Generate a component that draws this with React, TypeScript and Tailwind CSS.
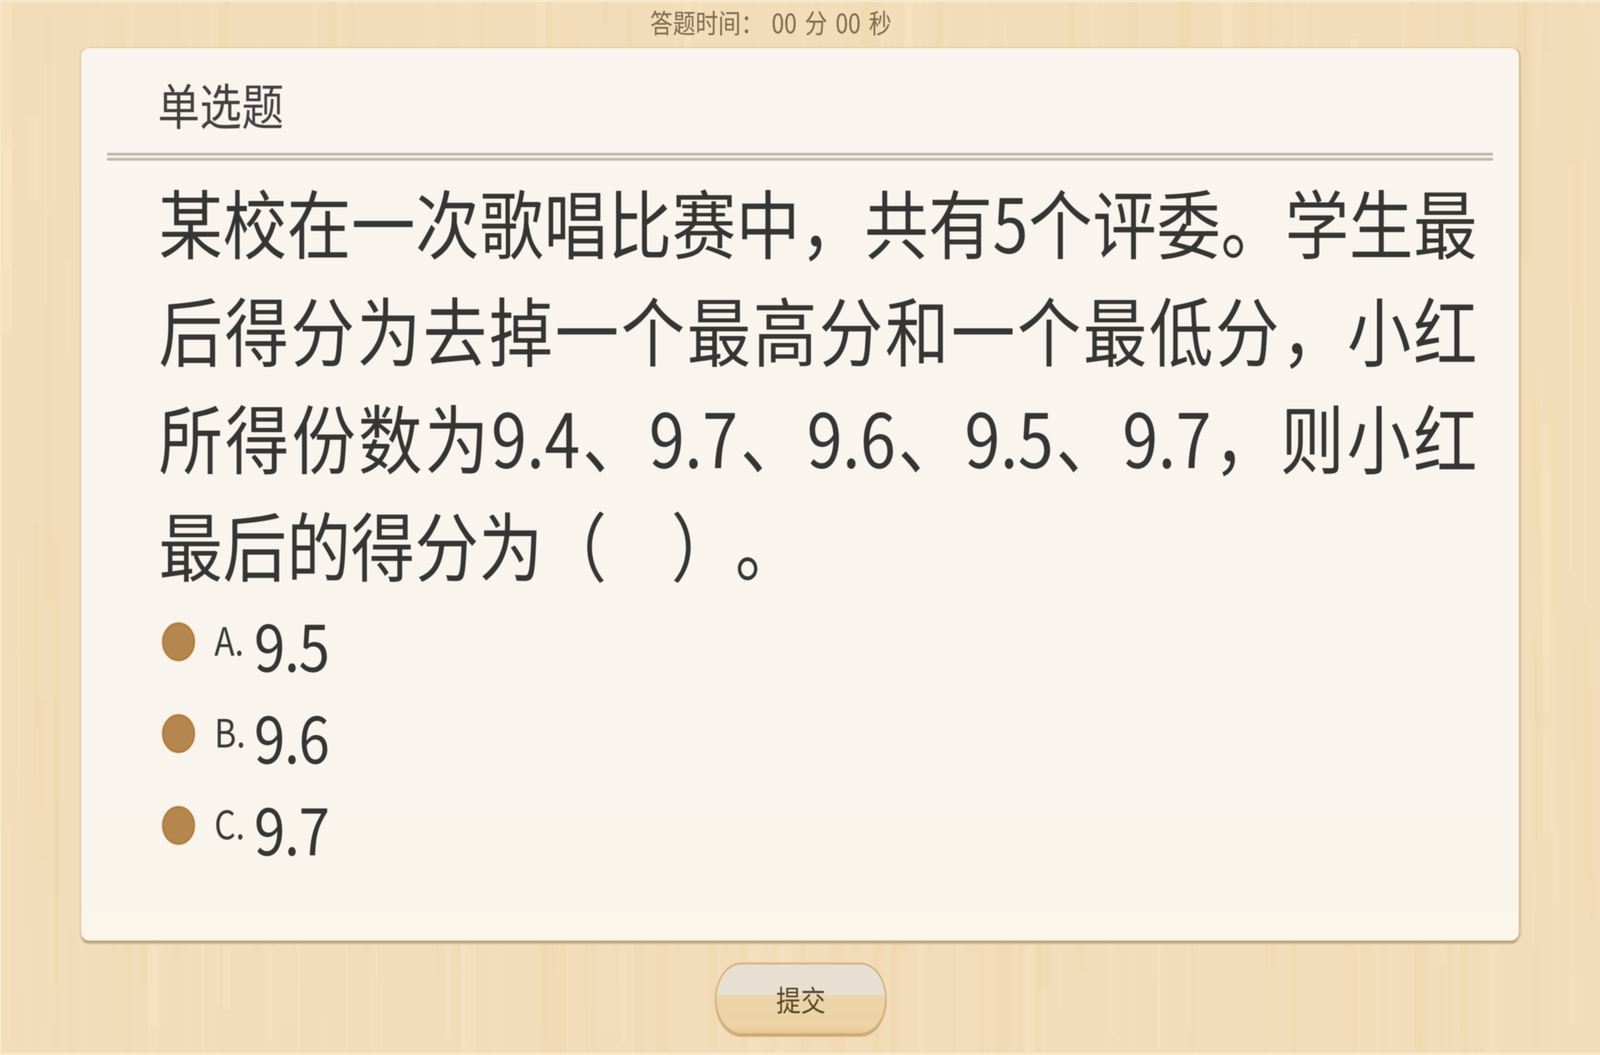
import React from "react";

const cjk = "font-['Noto_Sans_CJK_SC','Microsoft_YaHei',sans-serif]";

function Wood() {
  let seed = 1337;
  const rnd = () => {
    seed = (seed * 1103515245 + 12345) & 0x7fffffff;
    return seed / 0x7fffffff;
  };
  const rects: React.ReactElement[] = [];
  for (let i = 0; i < 700; i++) {
    const light = rnd() > 0.5;
    const x = rnd() * 4799;
    const w = 3 + rnd() * rnd() * 46;
    const y = rnd() * 2700 - 300;
    const h = 120 + rnd() * 1100;
    const o = 0.08 + rnd() * 0.26;
    rects.push(
      <rect key={i} x={x} y={y} width={w} height={h} fill={light ? "#fbe8ca" : "#eed6a8"} opacity={o} />
    );
  }
  return (
    <svg className="absolute inset-0 w-full h-full" viewBox="0 0 4799 2700" preserveAspectRatio="none" aria-hidden="true">
      <g>{rects}</g>
      <rect x="0" y="0" width="4799" height="5" fill="#f9ebd0" />
      <rect x="0" y="2694" width="4799" height="6" fill="#fbe7ca" />
      <rect x="0" y="0" width="4" height="2700" fill="#f9ebd0" />
    </svg>
  );
}

function Option({ letter, value }: { letter: string; value: string }) {
  return (
    <div className="flex h-[235px] items-start">
      <div className="mt-[55px] ml-[241px] h-[99px] w-[99px] shrink-0 rounded-full border-[5px] border-[#ac7c42] bg-[#b5874f] shadow-[0_0_0_2px_#fbe3c2]" />
      <div className="mt-[47px] ml-[58px] w-[119px] shrink-0 text-[100px] leading-[100px] text-[#3a3a38]">{letter}</div>
      <div className="mt-[23px] text-[168px] leading-[170px] tracking-[-3px] text-[#353533]">{value}</div>
    </div>
  );
}

export default function App() {
  // the photographed window may be narrower than the 4799px design: fit the width to it
  const fit = window.innerWidth / 4799;
  return (
    <div className="h-screen w-screen overflow-hidden bg-[#f3dcb9]">
      <div
        className={`relative flex h-[2700px] w-[4799px] origin-top-left flex-col bg-[#f3dcb9] blur-[1px] ${cjk}`}
        style={{ transform: `scaleX(${fit})` }}
      >
        <Wood />
        <div className="relative flex h-[125px] items-center pb-[14px] pl-[1950px] text-[68px] whitespace-pre text-[#7c6a4e] [word-spacing:9px]">
          答题时间： 00 分 00 秒
        </div>
        <div className="relative ml-[245px] h-[2280px] w-[4309px] rounded-[20px] bg-[linear-gradient(#f9f5ee,#f9f5ee_85%,#faf6ea)] shadow-[0_0_0_2px_#fdf3df,0_-2px_5px_1px_#d2bf9c,0_9px_5px_1px_#b9a582,6px_0_5px_0_#c9b492,-3px_0_5px_0_#d8c4a0]">
          <div className="flex h-[266px] items-center pl-[228px] pt-[14px] text-[126px] leading-none text-[#42413f]">单选题</div>
          <div className="mx-[76px] h-[20px] border-b-[20px] border-double border-[#bcb8ae]" />
          <div className="ml-[231px] w-[3955px] pt-[16px] pb-[11px] text-justify text-[192px] leading-[275px] text-[#353533] [text-spacing-trim:space-all]">
            某校在一次歌唱比赛中，共有5个评委。学生最后得分为去掉一个最高分和一个最低分，小红所得份数为9.4、9.7、9.6、9.5、9.7，则小红最后的得分为（<span className="inline-block w-[193px]" />）。
          </div>
          <Option letter="A." value="9.5" />
          <Option letter="B." value="9.6" />
          <Option letter="C." value="9.7" />
        </div>
        <div className="relative mt-[59px] ml-[2145px] flex h-[184px] w-[514px] items-center justify-center rounded-[78px/92px] border-[4px] border-[#d1ae76] bg-[linear-gradient(#e7dfd2_0%,#e8e0d3_44%,#ecd5aa_45%,#edd3a6_90%,#e7c88f_100%)] text-[74px] leading-none text-[#5a4426] shadow-[0_5px_3px_#c9a66c,0_-2px_3px_#ecd5ac]">
          提交
        </div>
      </div>
    </div>
  );
}
